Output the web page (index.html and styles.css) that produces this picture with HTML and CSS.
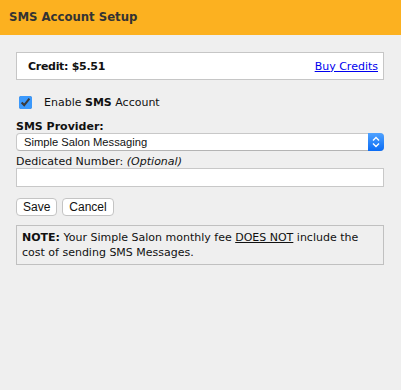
FILE: index.html
```html
<!DOCTYPE html>
<html lang="en">
<head>
    <meta charset="UTF-8">
    <meta name="viewport" content="width=device-width, initial-scale=1.0">
    <title>SMS Account Setup</title>
    <link rel="stylesheet" href="styles.css">
</head>
<body>
    <div class="header">SMS Account Setup</div>
    <div class="content">
        <div class="credit-box">
            <span class="credit">Credit: $5.51</span>
            <a href="#" class="buy-link">Buy Credits</a>
        </div>

        <label class="enable-row">
            <input type="checkbox" checked>
            <span>Enable <b>SMS</b> Account</span>
        </label>

        <label class="field-label bold" for="provider">SMS Provider:</label>
        <div class="select-wrap">
            <select id="provider">
                <option>Simple Salon Messaging</option>
            </select>
            <span class="select-arrow">
                <svg width="8" height="12" viewBox="0 0 8 12">
                    <path d="M1 4.5 L4 1.5 L7 4.5 M1 7.5 L4 10.5 L7 7.5" fill="none" stroke="#fff" stroke-width="1.4"/>
                </svg>
            </span>
        </div>

        <label class="field-label second" for="dedicated">Dedicated Number: <i>(Optional)</i></label>
        <input type="text" id="dedicated" class="text-input">

        <div class="buttons">
            <button class="btn">Save</button>
            <button class="btn">Cancel</button>
        </div>

        <div class="note">
            <b>NOTE:</b> Your Simple Salon monthly fee <u>DOES NOT</u> include the cost of sending SMS Messages.
        </div>
    </div>
</body>
</html>
```

FILE: styles.css
```css
body {
    margin: 0;
    background-color: #efefef;
    font-family: "DejaVu Sans", Verdana, sans-serif;
    font-size: 11px;
    color: #111;
}
.header {
    background-color: #fcb120;
    color: #333;
    font-weight: bold;
    font-size: 11.7px;
    height: 35px;
    line-height: 35px;
    padding-left: 9px;
}
.content {
    padding: 17px 17px 0 16px;
}
.credit-box {
    display: flex;
    justify-content: space-between;
    align-items: center;
    background: #fff;
    border: 1px solid #c6c6c6;
    height: 26px;
    padding: 0 5px 0 11px;
}
.credit {
    font-weight: bold;
    letter-spacing: -0.3px;
}
.buy-link {
    color: #0000ee;
}
.enable-row {
    display: flex;
    align-items: center;
    margin-top: 16px;
    height: 13px;
}
.enable-row input {
    margin: 0 12px 0 3px;
    width: 13px;
    height: 13px;
    accent-color: #3b99fc;
}
.field-label {
    display: block;
    line-height: 13px;
    margin-top: 11px;
}
.field-label.second {
    margin-top: 4px;
}
.bold {
    font-weight: bold;
}
.select-wrap {
    position: relative;
}
.select-wrap select {
    display: block;
    width: 100%;
    height: 18px;
    margin: 0;
    appearance: none;
    -webkit-appearance: none;
    background: #fff;
    border: 1px solid #c8c8c8;
    border-bottom-color: #b4b4b4;
    border-radius: 4px;
    padding: 0 0 0 7px;
    font-family: "Liberation Sans", Arial, sans-serif;
    font-size: 11.2px;
    color: #111;
}
.select-arrow {
    position: absolute;
    right: 0;
    top: 0;
    width: 16px;
    height: 18px;
    display: flex;
    align-items: center;
    justify-content: center;
    background: linear-gradient(#4fa2ff, #0a6cf5);
    border-radius: 0 4px 4px 0;
}
.text-input {
    display: block;
    box-sizing: border-box;
    width: 100%;
    height: 19px;
    margin: 0;
    border: 1px solid #c8c8c8;
    background: #fff;
}
.buttons {
    display: flex;
    gap: 5px;
    margin-top: 11px;
}
.btn {
    height: 18px;
    padding: 0 6px;
    background: #fff;
    border: 1px solid #c4c4c4;
    border-radius: 4px;
    font-family: "Liberation Sans", Arial, sans-serif;
    font-size: 12px;
    color: #111;
}
.note {
    margin-top: 9px;
    border: 1px solid #c0c0c0;
    padding: 4px 5px;
    line-height: 15px;
}
```
